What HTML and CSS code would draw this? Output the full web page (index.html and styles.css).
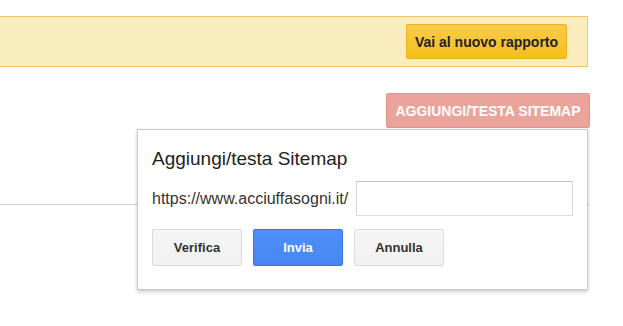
FILE: index.html
```html
<!DOCTYPE html>
<html lang="it">
<head>
  <meta charset="UTF-8">
  <meta name="viewport" content="width=device-width, initial-scale=1.0">
  <title>Sitemap</title>
  <link rel="stylesheet" href="styles.css">
</head>
<body>
  <div class="banner">
    <a href="#" class="btn-yellow">Vai al nuovo rapporto</a>
  </div>

  <div class="toolbar">
    <div class="add-wrap">
      <button class="btn-add">AGGIUNGI/TESTA SITEMAP</button>

      <!-- popup sopra il contenuto -->
      <div class="dialog">
        <div class="dialog-title">Aggiungi/testa Sitemap</div>
        <div class="dialog-row">
          <span class="site-url">https://www.acciuffasogni.it/</span>
          <input type="text" class="sitemap-input">
        </div>
        <div class="dialog-actions">
          <button class="btn btn-grey">Verifica</button>
          <button class="btn btn-blue">Invia</button>
          <button class="btn btn-grey">Annulla</button>
        </div>
      </div>
    </div>
  </div>

  <div class="divider"></div>
</body>
</html>
```

FILE: styles.css
```css
:root {
  --text-color: #222;
  --banner-bg: #f9edbe;
  --banner-border: #f0c36d;
  --line-color: #d6d6d6;
}

html, body {
  height: 100%;
}

body {
  box-sizing: border-box;
  margin: 0;
  padding: 16px 0 0 0;
  font-family: 'Liberation Sans', Arial, sans-serif;
  color: var(--text-color);
  background-color: #fff;
}

.banner {
  display: flex;
  justify-content: flex-end;
  align-items: center;
  height: 49px;
  margin: 0 35px 0 -1px;
  padding-right: 20px;
  background-color: var(--banner-bg);
  border: 1px solid var(--banner-border);
}

.btn-yellow {
  display: inline-flex;
  align-items: center;
  justify-content: center;
  box-sizing: border-box;
  width: 161px;
  height: 35px;
  font-size: 14px;
  font-weight: bold;
  color: #222;
  text-decoration: none;
  background: linear-gradient(#f8cb4b, #f5be1d);
  border: 1px solid #e9b514;
  border-radius: 2px;
}

.toolbar {
  display: flex;
  justify-content: flex-end;
  margin: 26px 33px 0 0;
}

.add-wrap {
  position: relative;
}

.btn-add {
  box-sizing: border-box;
  width: 204px;
  height: 35px;
  padding: 0;
  font-family: inherit;
  font-size: 14px;
  font-weight: bold;
  color: #fff;
  background-color: #eba49c;
  border: 1px solid #e5958d;
  border-radius: 2px;
}

.divider {
  margin: 76px 33px 0 0;
  border-top: 1px solid var(--line-color);
}

.dialog {
  position: absolute;
  top: 36px;
  right: 2px;
  z-index: 10;
  box-sizing: border-box;
  width: 451px;
  padding: 17px 14px 23px 14px;
  background-color: #fff;
  border: 1px solid #c8c8c8;
  box-shadow: 0 2px 4px rgba(0, 0, 0, 0.2);
}

.dialog-title {
  font-size: 19px;
  color: #222;
  line-height: 24px;
  margin-bottom: 10px;
}

.dialog-row {
  display: flex;
  align-items: center;
  gap: 8px;
}

.site-url {
  font-size: 16px;
  color: #333;
}

.sitemap-input {
  box-sizing: border-box;
  width: 217px;
  height: 35px;
  margin: 0;
  border: 1px solid #d9d9d9;
  border-top-color: #c0c0c0;
  border-radius: 1px;
}

.dialog-actions {
  display: flex;
  gap: 11px;
  margin-top: 13px;
}

.btn {
  box-sizing: border-box;
  width: 90px;
  height: 37px;
  padding: 0;
  font-family: inherit;
  font-size: 13px;
  font-weight: bold;
  border-radius: 2px;
}

.btn-grey {
  color: #333;
  background: linear-gradient(#f5f5f5, #f1f1f1);
  border: 1px solid #dcdcdc;
}

.btn-blue {
  color: #fff;
  background: linear-gradient(#4d90fe, #4787ed);
  border: 1px solid #3079ed;
}
```
